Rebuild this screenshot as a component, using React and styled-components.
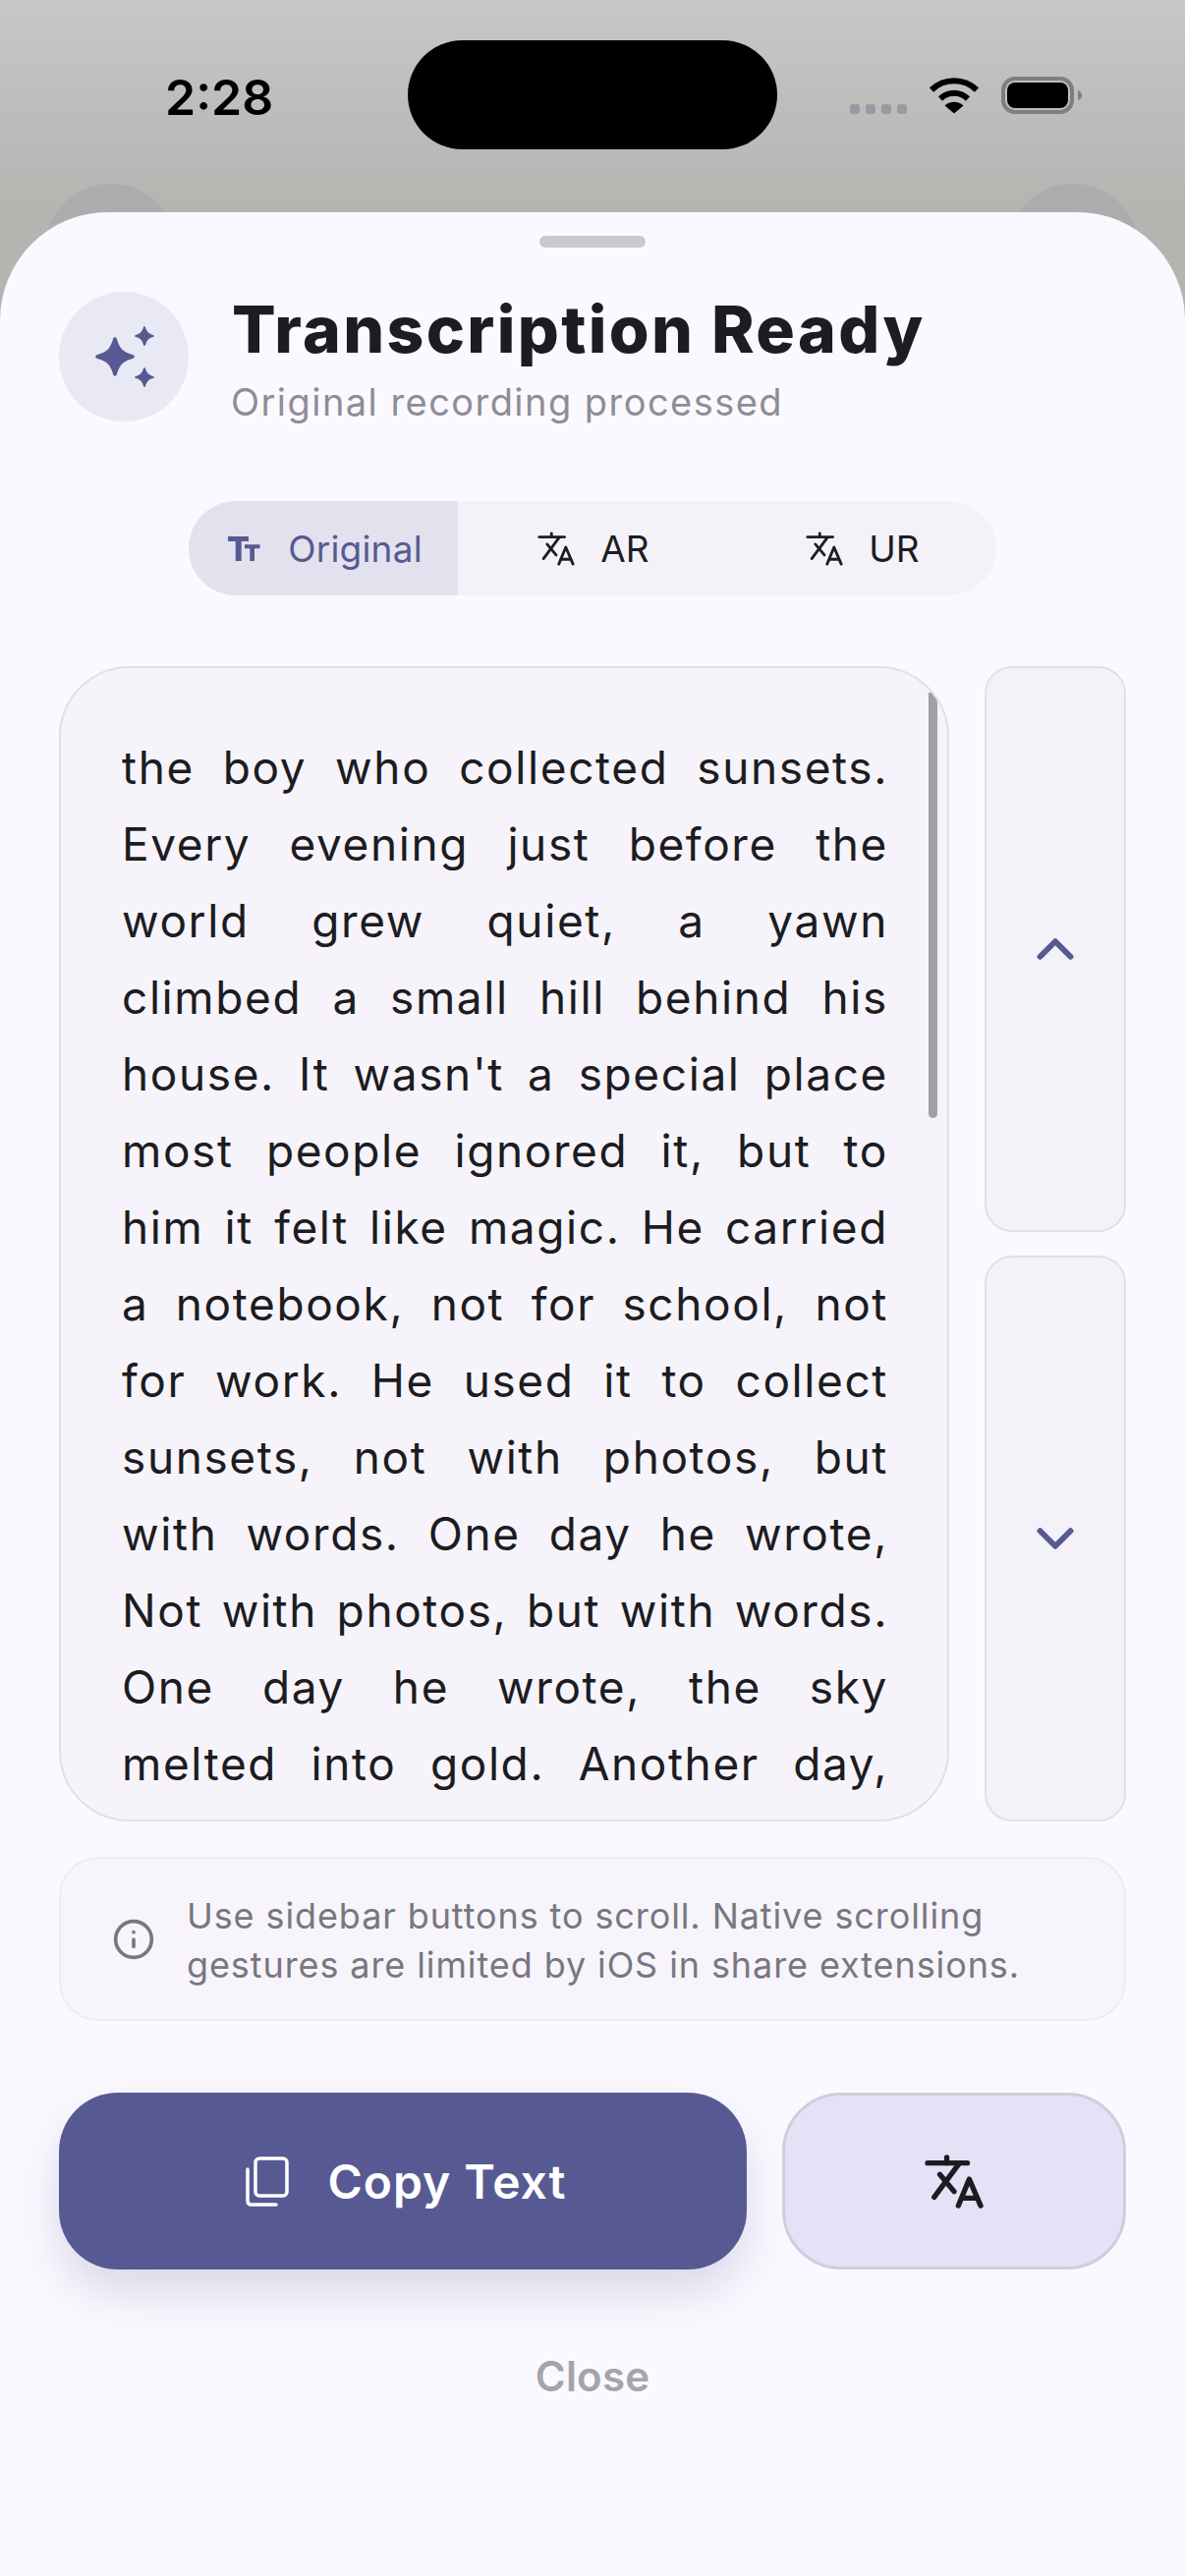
import React from 'react'
import styled, { createGlobalStyle } from 'styled-components'
import { ChevronDown, ChevronUp, Info } from 'lucide-react'

const GlobalStyle = createGlobalStyle`
  html, body {
    margin: 0;
    padding: 0;
    background: #fbf9ff;
  }
  * {
    box-sizing: border-box;
  }
`

const Page = styled.div`
  position: relative;
  width: 1206px;
  height: 2622px;
  overflow: hidden;
  display: flex;
  flex-direction: column;
  font-family: Inter, "Liberation Sans", sans-serif;
  background: linear-gradient(180deg, #c7c7c7 0, #b3b5b1 216px);
`

const StatusBar = styled.div`
  height: 216px;
  flex: none;
  display: flex;
  align-items: flex-start;
  padding: 41px 0 0 168px;
`

const Time = styled.div`
  width: 247px;
  margin-top: 31px;
  font-size: 50px;
  line-height: 54px;
  font-weight: 600;
  color: #000;
`

const Island = styled.div`
  width: 376px;
  height: 111px;
  border-radius: 56px;
  background: #000;
`

const StatusIcons = styled.div`
  display: flex;
  align-items: flex-end;
  margin: 37px 0 0 74px;
`

const Dots = styled.div`
  display: flex;
  gap: 6px;
  margin-right: 22px;
`

const Dot = styled.span`
  width: 10px;
  height: 10px;
  border-radius: 3px;
  background: #9a9aa2;
`

const Blob = styled.div`
  position: absolute;
  top: 187px;
  left: ${(p) => p.$left}px;
  width: 134px;
  height: 134px;
  border-radius: 50%;
  background: #acadac;
`

const Sheet = styled.div`
  position: relative;
  flex: 1;
  display: flex;
  flex-direction: column;
  padding: 24px 60px 0;
  border-radius: 110px 110px 0 0;
  background: #fbf9ff;
`

const Handle = styled.div`
  align-self: center;
  width: 108px;
  height: 12px;
  border-radius: 6px;
  background: #c9c8d0;
`

const Header = styled.div`
  display: flex;
  align-items: center;
  gap: 44px;
  height: 132px;
  margin-top: 45px;
`

const IconCircle = styled.div`
  width: 132px;
  height: 132px;
  flex: none;
  border-radius: 50%;
  background: #e9e8f5;
`

const Headings = styled.div`
  display: flex;
  flex-direction: column;
  margin-top: 4px;
`

const Title = styled.div`
  font-size: 66px;
  line-height: 72px;
  font-weight: 800;
  letter-spacing: 2.35px;
  color: #1c1c21;
`

const Subtitle = styled.div`
  margin: 15px 0 0 -1px;
  font-size: 38px;
  line-height: 46px;
  letter-spacing: 1.45px;
  color: #8e8d95;
`

const Tabs = styled.div`
  align-self: center;
  display: flex;
  width: 822px;
  height: 96px;
  margin-top: 81px;
  border-radius: 48px;
  overflow: hidden;
  background: #f4f2f8;
`

const Tab = styled.div`
  width: 274px;
  flex: none;
  display: flex;
  align-items: center;
  justify-content: center;
  gap: ${(p) => (p.$active ? 28 : 26)}px;
  padding-left: ${(p) => (p.$active ? 4 : 2)}px;
  font-size: 37px;
  letter-spacing: 0.2px;
  color: ${(p) => (p.$active ? '#575a92' : '#1c1c21')};
  background: ${(p) => (p.$active ? '#e3e1ee' : 'transparent')};
`

const ReaderRow = styled.div`
  display: flex;
  gap: 36px;
  height: 1176px;
  margin-top: 72px;
`

const Reader = styled.div`
  position: relative;
  width: 906px;
  overflow: hidden;
  padding: 62px 60px 0 62px;
  border: 2px solid #e1dfe8;
  border-radius: 72px;
  background: #f6f4fa;
`

const TextLine = styled.div`
  height: 78px;
  font-size: 46px;
  line-height: 78px;
  letter-spacing: 1.6px;
  white-space: nowrap;
  text-align: justify;
  text-align-last: justify;
  color: #1c1c21;
`

const ScrollThumb = styled.div`
  position: absolute;
  top: 25px;
  right: 10px;
  width: 9px;
  height: 433px;
  border-radius: 0 0 5px 5px;
  background: #a09ea6;
`

const SideColumn = styled.div`
  flex: 1;
  display: flex;
  flex-direction: column;
  gap: 24px;
`

const SideButton = styled.div`
  flex: 1;
  display: flex;
  align-items: center;
  justify-content: center;
  border: 2px solid #e1dfe8;
  border-radius: 28px;
  background: #f4f2f8;
  color: #575a92;
`

const Notice = styled.div`
  display: flex;
  align-items: center;
  gap: 32px;
  height: 167px;
  margin-top: 36px;
  padding-left: 52px;
  border: 2px solid #eeecf3;
  border-radius: 40px;
  background: #f7f5fb;
  color: #78777f;
`

const NoticeText = styled.div`
  margin-top: 2px;
  font-size: 36px;
  line-height: 50px;
  letter-spacing: 0.9px;
`

const Actions = styled.div`
  display: flex;
  gap: 36px;
  height: 180px;
  margin-top: 73px;
`

const CopyButton = styled.div`
  width: 700px;
  display: flex;
  align-items: center;
  justify-content: center;
  gap: 40px;
  padding-left: 6px;
  border-radius: 60px;
  background: #575a92;
  box-shadow: 0 24px 48px rgba(87, 90, 146, 0.2);
  color: #fff;
  font-size: 48px;
  font-weight: 600;
  letter-spacing: 0.95px;
`

const TranslateButton = styled.div`
  flex: 1;
  display: flex;
  align-items: center;
  justify-content: center;
  border: 3px solid #d0cedb;
  border-radius: 60px;
  background: #e3e2f6;
  color: #1c1c21;
`

const CloseLabel = styled.div`
  margin-top: 84px;
  text-align: center;
  font-size: 42px;
  line-height: 50px;
  font-weight: 600;
  letter-spacing: 0.2px;
  color: #a5a4ab;
`

const lines = [
  'the boy who collected sunsets.',
  'Every evening just before the',
  'world grew quiet, a yawn',
  'climbed a small hill behind his',
  "house. It wasn't a special place",
  'most people ignored it, but to',
  'him it felt like magic. He carried',
  'a notebook, not for school, not',
  'for work. He used it to collect',
  'sunsets, not with photos, but',
  'with words. One day he wrote,',
  'Not with photos, but with words.',
  'One day he wrote, the sky',
  'melted into gold. Another day,',
]

const STAR = 'M0 -1C.18 -.38 .38 -.18 1 0C.38 .18 .18 .38 0 1C-.18 .38 -.38 .18 -1 0C-.38 -.18 -.18 -.38 0 -1Z'

const Sparkles = () => (
  <svg width="132" height="132" viewBox="0 0 132 132" fill="#575a92" stroke="#575a92" strokeLinejoin="round">
    <path d={STAR} transform="translate(57 66) scale(18)" strokeWidth="0.2" />
    <path d={STAR} transform="translate(87 45) scale(9)" strokeWidth="0.2" />
    <path d={STAR} transform="translate(87 87) scale(9)" strokeWidth="0.2" />
  </svg>
)

const Wifi = () => (
  <svg width="52" height="38" viewBox="0 0 52 38" fill="none" stroke="#000" strokeWidth="6">
    <path d="M3 13.5A33 33 0 0 1 49 13.5" />
    <path d="M12 22.5A20 20 0 0 1 40 22.5" />
    <path d="M26 37.5L16.5 29.5A14 14 0 0 1 35.5 29.5Z" fill="#000" stroke="none" />
  </svg>
)

const Battery = () => (
  <svg width="84" height="38" viewBox="0 0 84 38" style={{ marginLeft: 22 }}>
    <rect x="2" y="2" width="70" height="34" rx="12" fill="none" stroke="#7f7e86" strokeWidth="4" />
    <rect x="6" y="6" width="62" height="26" rx="8" fill="#000" />
    <path d="M78 14C81 15 82 17 82 19C82 21 81 23 78 24Z" fill="#7f7e86" />
  </svg>
)

const TextSize = () => (
  <svg width="33" height="25" viewBox="0 0 33 25" fill="#575a92">
    <path d="M0 0H21V5H13.7V25H7.7V5H0Z" />
    <path d="M17 8.3H32.5V12.3H27V25H22.3V12.3H17Z" />
  </svg>
)

const Translate = ({ width, height, stroke }) => (
  <svg
    width={width}
    height={height}
    viewBox="14 11 62 57"
    fill="none"
    stroke="currentColor"
    strokeWidth={stroke}
    strokeLinecap="round"
    strokeLinejoin="round"
  >
    <path d="M17 20H59" />
    <path d="M37.3 14V20" />
    <path d="M50 21L24 56" />
    <path d="M30 32L45 50" />
    <path d="M49.5 65L61 37L73 65" />
    <path d="M53.5 57H69" />
  </svg>
)

const CopyIcon = () => (
  <svg width="44" height="51" viewBox="0 0 44 51" fill="none" stroke="#fff" strokeWidth="3.5" strokeLinecap="round" strokeLinejoin="round">
    <rect x="10" y="2" width="32" height="38" rx="4" />
    <path d="M2 13V45C2 47.5 3.5 49 6 49H31" />
  </svg>
)

const App = () => {
  return (
    <>
      <GlobalStyle />
      <Page>
        <Blob $left={46} />
        <Blob $left={1025} />
        <StatusBar>
          <Time>2:28</Time>
          <Island />
          <StatusIcons>
            <Dots>
              <Dot />
              <Dot />
              <Dot />
              <Dot />
            </Dots>
            <Wifi />
            <Battery />
          </StatusIcons>
        </StatusBar>
        <Sheet>
          <Handle />
          <Header>
            <IconCircle>
              <Sparkles />
            </IconCircle>
            <Headings>
              <Title>Transcription Ready</Title>
              <Subtitle>Original recording processed</Subtitle>
            </Headings>
          </Header>
          <Tabs>
            <Tab $active>
              <TextSize />
              Original
            </Tab>
            <Tab>
              <Translate width={38} height={35} stroke={4.6} />
              AR
            </Tab>
            <Tab>
              <Translate width={38} height={35} stroke={4.6} />
              UR
            </Tab>
          </Tabs>
          <ReaderRow>
            <Reader>
              {lines.map((line) => (
                <TextLine key={line}>{line}</TextLine>
              ))}
              <ScrollThumb />
            </Reader>
            <SideColumn>
              <SideButton>
                <ChevronUp size={62} strokeWidth={2.3} />
              </SideButton>
              <SideButton>
                <ChevronDown size={62} strokeWidth={2.3} />
              </SideButton>
            </SideColumn>
          </ReaderRow>
          <Notice>
            <Info size={44} strokeWidth={2} />
            <NoticeText>
              Use sidebar buttons to scroll. Native scrolling
              <br />
              gestures are limited by iOS in share extensions.
            </NoticeText>
          </Notice>
          <Actions>
            <CopyButton>
              <CopyIcon />
              Copy Text
            </CopyButton>
            <TranslateButton>
              <Translate width={60} height={55} stroke={5.5} />
            </TranslateButton>
          </Actions>
          <CloseLabel>Close</CloseLabel>
        </Sheet>
      </Page>
    </>
  )
}

export default App
